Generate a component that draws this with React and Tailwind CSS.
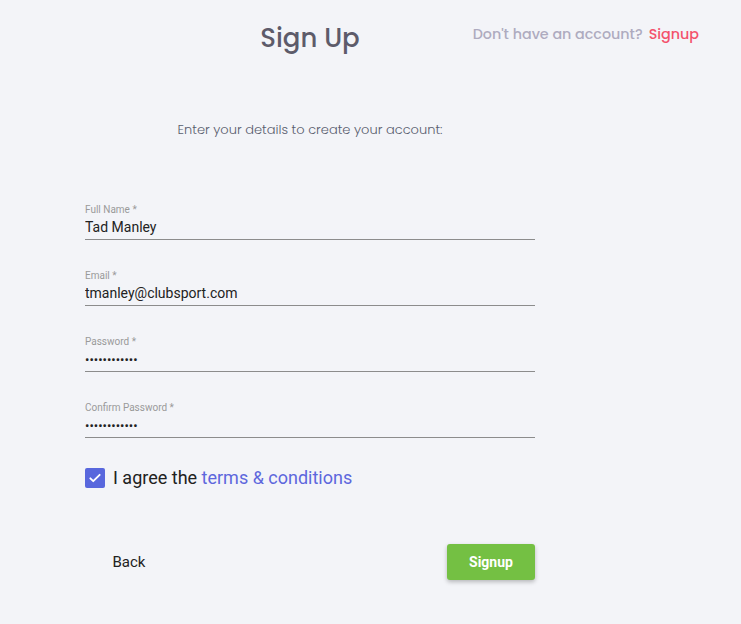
import React from "react";

function Field({ label, value, type = "text" }) {
  return (
    <div className="flex flex-col">
      <label className="text-[10px] leading-[12px] text-[#9a9a9a]">{label}</label>
      <div className="h-[24px] flex items-center border-b border-[#8c8c8c]">
        <input
          readOnly
          type={type}
          value={value}
          className={
            type === "password"
              ? "w-full bg-transparent outline-none text-[13px] text-[#222] font-['Roboto',sans-serif]"
              : "w-full bg-transparent outline-none text-[14px] text-[#222] font-['Roboto',sans-serif]"
          }
        />
      </div>
    </div>
  );
}

export default function App() {
  return (
    <div className="relative min-h-screen w-full bg-[#f3f4f8] font-['Roboto',sans-serif]">
      <div className="absolute top-[24px] right-[42px] text-[14.3px] leading-[20px] font-['Poppins','Open_Sans',sans-serif] font-medium">
        <span className="text-[#aeabbf]">Don't have an account?</span>
        <span className="ml-[6px] text-[#f4516c]">Signup</span>
      </div>
      <div className="ml-[85px] w-[450px] pt-[22px] flex flex-col">
        <h1 className="text-center text-[26px] leading-[32px] font-medium text-[#5d5b6a] font-['Poppins','Open_Sans',sans-serif]">
          Sign Up
        </h1>
        <p className="mt-[66px] text-center text-[13px] leading-[20px] text-[#595d6e] font-['Poppins','Open_Sans',sans-serif] font-light">
          Enter your details to create your account:
        </p>
        <div className="mt-[64px] flex flex-col gap-[30px]">
          <Field label="Full Name *" value="Tad Manley" />
          <Field label="Email *" value="tmanley@clubsport.com" />
          <Field label="Password *" value="••••••••••••" type="password" />
          <Field label="Confirm Password *" value="••••••••••••" type="password" />
        </div>
        <div className="mt-[28px] flex items-center">
          <span className="w-[20px] h-[20px] rounded-[2px] bg-[#5867dd] flex items-center justify-center">
            <svg width="14" height="14" viewBox="0 0 24 24" fill="none" stroke="white" strokeWidth="3.2" strokeLinecap="round" strokeLinejoin="round">
              <path d="M4 12.5l5 5L20 6.5" />
            </svg>
          </span>
          <span className="ml-[8px] text-[18px] leading-[24px] text-[#212121]">
            I agree the <span className="text-[#5d67dd]">terms &amp; conditions</span>
          </span>
        </div>
        <div className="mt-[54px] flex items-center justify-between">
          <button className="w-[88px] h-[36px] text-[15px] font-normal text-[#212121]">Back</button>
          <button className="w-[88px] h-[36px] rounded-[3px] bg-[#74c043] text-white text-[14px] font-bold shadow-[0_2px_4px_rgba(0,0,0,0.25)]">
            Signup
          </button>
        </div>
      </div>
    </div>
  );
}
